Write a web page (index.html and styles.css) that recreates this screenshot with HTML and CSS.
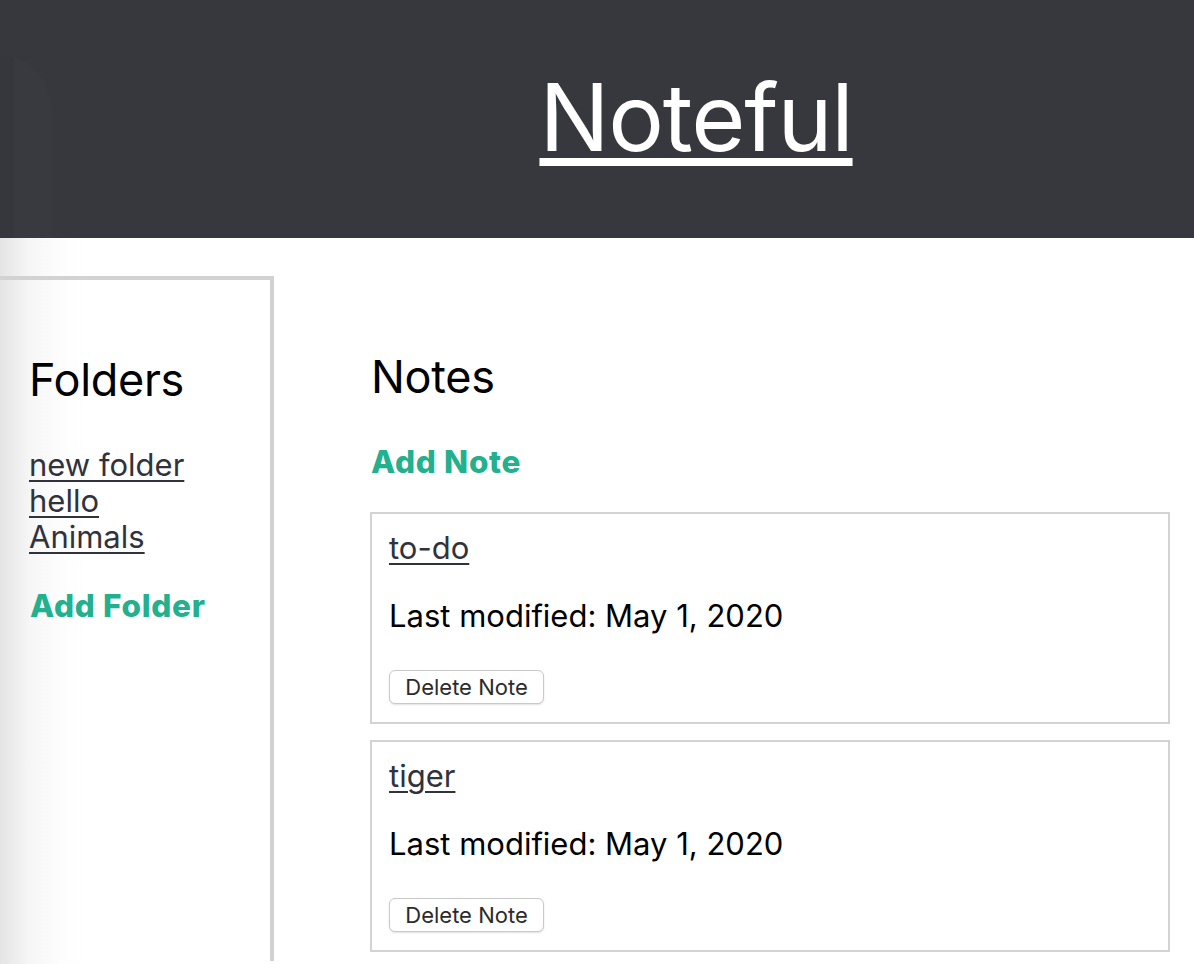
FILE: index.html
```html
<!DOCTYPE html>
<html lang="en">
<head>
<meta charset="utf-8">
<title>Noteful</title>
<link rel="stylesheet" href="styles.css">
</head>
<body>
<header class="site-header">
  <span class="header-ghost"></span>
  <h1 class="site-title"><a href="#">Noteful</a></h1>
</header>
<div class="app">
  <nav class="sidebar">
    <h2 class="section-title">Folders</h2>
    <ul class="folder-list">
      <li><a href="#">new folder</a></li>
      <li><a href="#">hello</a></li>
      <li><a href="#">Animals</a></li>
    </ul>
    <a class="add-link add-folder" href="#">Add Folder</a>
  </nav>
  <main class="main">
    <h2 class="section-title">Notes</h2>
    <a class="add-link add-note" href="#">Add Note</a>
    <ul class="note-list">
      <li class="note-card">
        <a class="note-title" href="#">to-do</a>
        <p class="note-date">Last modified: May 1, 2020</p>
        <button class="delete-btn" type="button">Delete Note</button>
      </li>
      <li class="note-card">
        <a class="note-title" href="#">tiger</a>
        <p class="note-date">Last modified: May 1, 2020</p>
        <button class="delete-btn" type="button">Delete Note</button>
      </li>
    </ul>
  </main>
</div>
</body>
</html>
```
FILE: styles.css
```css
html, body {
  margin: 0;
  padding: 0;
}

body {
  font-family: Inter, "Noto Sans", "Liberation Sans", sans-serif;
  color: #000;
  background: linear-gradient(to right, #e4e4e4 0px, #f6f6f6 30px, #fdfdfd 60px, #ffffff 85px) #fff;
  min-height: 964px;
  overflow: hidden;
}

.site-header {
  position: relative;
  height: 238px;
  background: #37383e;
  display: flex;
  align-items: center;
  justify-content: center;
  padding-left: 198px;
  padding-bottom: 4px;
  box-sizing: border-box;
}

.header-ghost {
  position: absolute;
  left: 0;
  top: 55px;
  width: 52px;
  height: 183px;
  background: linear-gradient(to right, #36373d 0px, #36373d 14px, #393a40 14px);
  border-top-right-radius: 52px 60px;
}

.site-title {
  margin: 0;
  font-size: 93px;
  font-weight: 400;
  line-height: 116px;
  letter-spacing: -1.2px;
}

.site-title a {
  color: #fff;
  text-decoration: underline;
  text-decoration-thickness: 8px;
  text-underline-offset: 7px;
}

.app {
  display: flex;
  align-items: stretch;
}

.sidebar {
  width: 241px;
  flex: 0 0 241px;
  margin-top: 38px;
  border-top: 4px solid #d2d2d2;
  border-right: 4px solid #d2d2d2;
  padding: 71px 0 0 29px;
  box-sizing: content-box;
  min-height: 610px;
}

.section-title {
  margin: 0;
  font-size: 45px;
  font-weight: 400;
  line-height: 58px;
  letter-spacing: -0.3px;
}

.folder-list {
  list-style: none;
  margin: 38px 0 0;
  padding: 0;
}

.folder-list li {
  font-size: 31px;
  line-height: 36px;
}

.folder-list a,
.note-title {
  color: #30323c;
  text-decoration: underline;
  text-decoration-thickness: 2px;
  text-underline-offset: 4px;
}

.add-link {
  display: block;
  color: #22b08f;
  font-weight: 800;
  font-size: 31.5px;
  line-height: 36px;
  text-decoration: none;
  letter-spacing: 0.7px;
}

.add-folder {
  margin-top: 33px;
  margin-left: 1px;
}

.main {
  flex: 1;
  padding: 110px 24px 0 96px;
}

.main .section-title {
  margin-left: 1px;
}

.add-note {
  margin-top: 38px;
  margin-left: 1px;
}

.note-list {
  list-style: none;
  margin: 32px 0 0;
  padding: 0;
  display: flex;
  flex-direction: column;
  gap: 16px;
}

.note-card {
  border: 2px solid #d3d3d3;
  padding: 16px 16px 0 17px;
  box-sizing: border-box;
  height: 212px;
}

.note-title {
  display: block;
  width: max-content;
  font-size: 31px;
  line-height: 36px;
}

.note-date {
  margin: 32px 0 0;
  font-size: 31px;
  line-height: 36px;
}

.delete-btn {
  display: block;
  margin-top: 36px;
  width: 155px;
  height: 34px;
  padding: 0;
  font-family: Inter, "Noto Sans", sans-serif;
  font-size: 22px;
  color: #2b2b2b;
  background: #fff;
  border: 1px solid #c9c9c9;
  border-radius: 6px;
  box-shadow: 0 1px 2px rgba(0, 0, 0, 0.12);
}
```
